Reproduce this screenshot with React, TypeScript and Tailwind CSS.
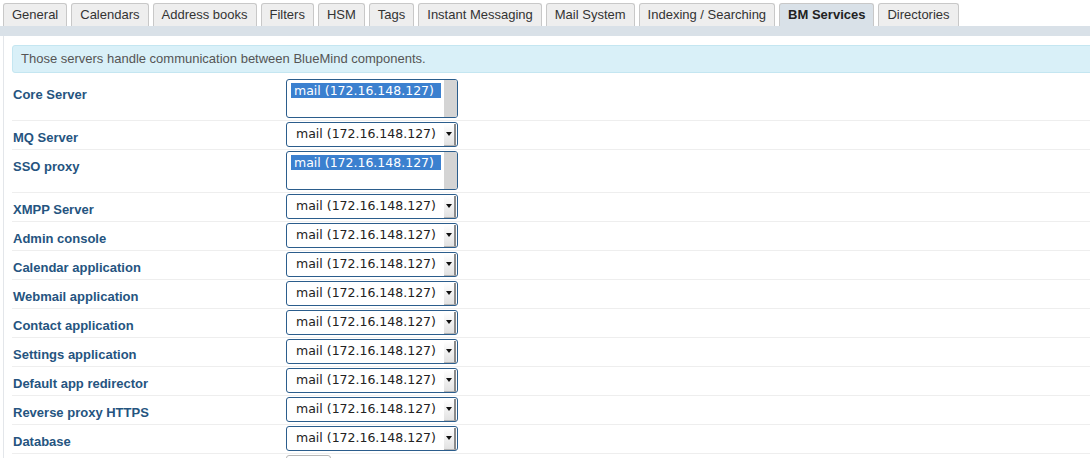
import React from 'react';

const TABS = [
  'General',
  'Calendars',
  'Address books',
  'Filters',
  'HSM',
  'Tags',
  'Instant Messaging',
  'Mail System',
  'Indexing / Searching',
  'BM Services',
  'Directories',
];

const ACTIVE_TAB = 'BM Services';

const SERVER = 'mail (172.16.148.127)';

type Row = { label: string; multi?: boolean };

const ROWS: Row[] = [
  { label: 'Core Server', multi: true },
  { label: 'MQ Server' },
  { label: 'SSO proxy', multi: true },
  { label: 'XMPP Server' },
  { label: 'Admin console' },
  { label: 'Calendar application' },
  { label: 'Webmail application' },
  { label: 'Contact application' },
  { label: 'Settings application' },
  { label: 'Default app redirector' },
  { label: 'Reverse proxy HTTPS' },
  { label: 'Database' },
];

const sans = "font-['Liberation_Sans',Arial,sans-serif]";
const dejavu = "font-['DejaVu_Sans',sans-serif]";

function MultiSelect() {
  return (
    <div className="flex h-[39px] w-[172px] overflow-hidden rounded-[3px] border border-[#2b5d8c] bg-white">
      <div className="flex-1 pl-[4px] pr-[3px] pt-[3px]">
        <div
          className={`${dejavu} h-[15px] bg-[#3b80cf] pl-[3px] text-[12.5px] leading-[15px] whitespace-nowrap text-white`}
        >
          {SERVER}
        </div>
      </div>
      <div className="w-[13px] bg-[#d4d4d4]" />
    </div>
  );
}

function SingleSelect() {
  return (
    <div className="flex h-[25px] w-[172px] items-center rounded-[3px] border border-[#2b5d8c] bg-white">
      <span className={`${dejavu} flex-1 pl-[9px] text-[12.5px] whitespace-nowrap text-[#222]`}>
        {SERVER}
      </span>
      <div className="mr-px flex h-[22px] w-[12px] items-center justify-center border-r-2 border-b border-r-[#8a8a8a] border-b-[#b5b5b5] bg-gradient-to-b from-white to-[#e2e2e2]">
        <span className="h-0 w-0 border-x-[3px] border-t-[4px] border-x-transparent border-t-[#111]" />
      </div>
    </div>
  );
}

export default function App() {
  return (
    <div className={`${sans} h-[458px] w-full overflow-hidden bg-white`}>
      {/* Onglets */}
      <div className="flex gap-1 pl-[3px] pt-[3px]">
        {TABS.map((t) => {
          const active = t === ACTIVE_TAB;
          return (
            <div
              key={t}
              className={`h-[23px] rounded-t-[3px] border border-b-0 border-[#c8c8c8] px-2 text-[13px] leading-[22px] whitespace-nowrap ${
                active ? 'bg-[#d9e1e8] font-bold text-[#222]' : 'bg-[#eeeeee] text-[#333]'
              }`}
            >
              {t}
            </div>
          );
        })}
      </div>
      <div className="h-[10px] bg-[#d9e1e8]" />

      {/* Contenu */}
      <div className="ml-[3px] border-l border-[#e3e6ea] pl-2 pt-[9px]">
        <div className="mb-[5px] mr-[-8px] flex h-[28px] items-center rounded-l-[3px] border border-[#c4e6f1] bg-[#d9f0f8] pl-2 text-[13px] text-[#555]">
          Those servers handle communication between BlueMind components.
        </div>

        {ROWS.map((r) => (
          <div key={r.label} className="flex border-b border-[#eeeeee] pb-[2px] pt-px">
            <div className="w-[274px] pl-px pt-[7px] text-[13px] leading-[18px] font-bold text-[#255480]">
              {r.label}
            </div>
            {r.multi ? <MultiSelect /> : <SingleSelect />}
          </div>
        ))}

        <div className="flex pt-px">
          <div className="w-[274px]" />
          <div className="h-[25px] w-[45px] rounded-[3px] border border-[#b8b8b8] bg-white" />
        </div>
      </div>
    </div>
  );
}
